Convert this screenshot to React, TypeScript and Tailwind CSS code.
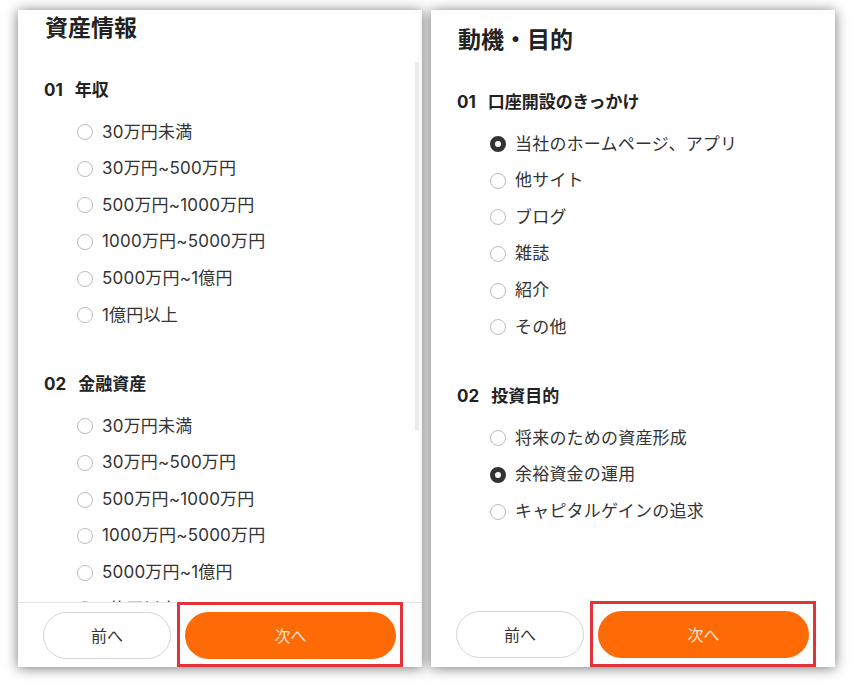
import React from 'react';

type Group = { no: string; label: string; options: string[]; selected?: number };

const assetGroups: Group[] = [
  { no: '01', label: '年収', options: ['30万円未満', '30万円~500万円', '500万円~1000万円', '1000万円~5000万円', '5000万円~1億円', '1億円以上'] },
  { no: '02', label: '金融資産', options: ['30万円未満', '30万円~500万円', '500万円~1000万円', '1000万円~5000万円', '5000万円~1億円', '1億円以上'] },
];

const motiveGroups: Group[] = [
  { no: '01', label: '口座開設のきっかけ', options: ['当社のホームページ、アプリ', '他サイト', 'ブログ', '雑誌', '紹介', 'その他'], selected: 0 },
  { no: '02', label: '投資目的', options: ['将来のための資産形成', '余裕資金の運用', 'キャピタルゲインの追求'], selected: 1 },
];

function Radio({ checked }: { checked: boolean }) {
  if (checked) {
    return <span className="w-[16px] h-[16px] rounded-full border-[5px] border-[#333] bg-white shrink-0" />;
  }
  return <span className="w-[16px] h-[16px] rounded-full border border-[#bdbdbd] bg-white shrink-0" />;
}

function Question({ group, first }: { group: Group; first: boolean }) {
  return (
    <div className={first ? 'mt-[36px]' : 'mt-[39.5px]'}>
      <div className="flex items-center h-[24px] pl-[26px] text-[17px] font-bold text-[#222]">
        <span>{group.no}</span>
        <span className="ml-[12px]">{group.label}</span>
      </div>
      <div className="mt-[11px]">
        {group.options.map((opt, i) => (
          <div key={opt} className="flex items-center h-[36.6px] pl-[59px]">
            <Radio checked={group.selected === i} />
            <span className="ml-[9px] text-[17px] tracking-[0.2px] text-[#333]">{opt}</span>
          </div>
        ))}
      </div>
    </div>
  );
}

function Panel({ title, groups, offset, divider, scrollbar }: { title: string; groups: Group[]; offset: string; divider: boolean; scrollbar: boolean }) {
  return (
    <div className="relative w-[404px] h-[657px] bg-white flex flex-col shadow-[0_1px_12px_rgba(0,0,0,0.55)]">
      <div className="relative flex-1 overflow-hidden">
        <div className={offset}>
          <h1 className="pl-[27px] text-[23px] leading-[30px] font-bold text-[#222]">{title}</h1>
          {groups.map((g, i) => (
            <Question key={g.no} group={g} first={i === 0} />
          ))}
        </div>
        {scrollbar && <div className="absolute right-[3px] top-[52px] w-[4px] h-[368px] bg-[#ececec]" />}
      </div>
      <div className={`relative h-[65px] shrink-0 flex items-start gap-[14px] pl-[25px] pr-[26px] pt-[9px] bg-white ${divider ? 'border-t border-[#e6e6e6]' : ''}`}>
        <button className="w-[128px] h-[47px] rounded-full border border-[#d4d4d4] bg-white text-[16px] text-[#333]">前へ</button>
        <button className="flex-1 h-[47px] rounded-full bg-[#fe6a06] text-[16px] text-[#ffe6d2]">次へ</button>
        <div className="absolute left-[159px] right-[19px] top-[-1px] bottom-0 border-[3px] border-[#e4323b]" />
      </div>
    </div>
  );
}

export default function App() {
  return (
    <div className="w-[854px] h-[686px] bg-white flex gap-[9px] pt-[10px] pl-[18px] overflow-hidden" style={{ fontFamily: 'Inter, "Noto Sans CJK JP", sans-serif' }}>
      <Panel title="資産情報" groups={assetGroups} offset="pt-[3px]" divider scrollbar />
      <Panel title="動機・目的" groups={motiveGroups} offset="pt-[15px]" divider={false} scrollbar={false} />
    </div>
  );
}
